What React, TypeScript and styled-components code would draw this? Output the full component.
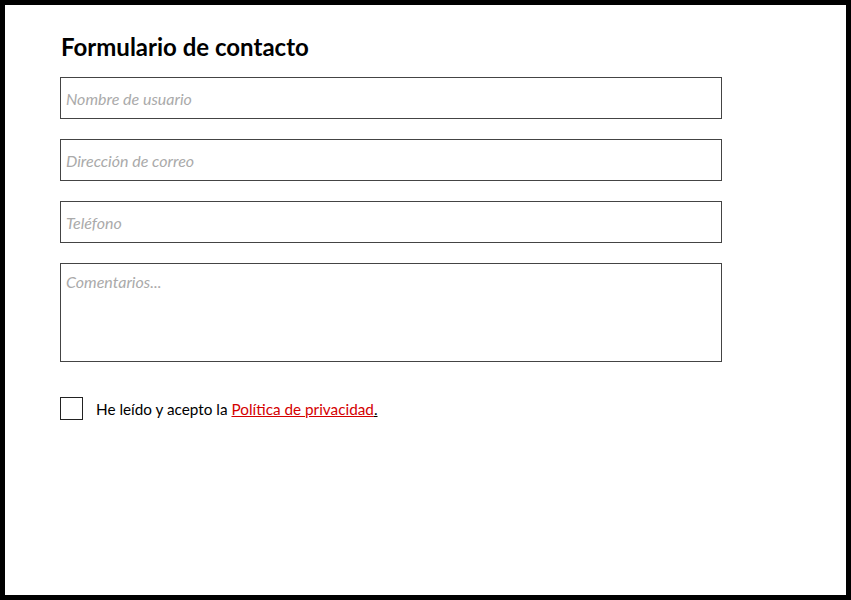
import React from 'react';
import styled, { createGlobalStyle } from 'styled-components';

const GlobalStyle = createGlobalStyle`
  html, body {
    margin: 0;
    padding: 0;
    background: #fff;
  }
  * {
    box-sizing: border-box;
  }
`;

const Frame = styled.div`
  width: 851px;
  height: 600px;
  border: 5px solid #000;
  background: #fff;
  padding: 27px 0 0 55px;
  font-family: Lato, 'Liberation Sans', sans-serif;
  color: #000;
`;

const Form = styled.form`
  width: 662px;
  display: flex;
  flex-direction: column;
`;

const Title = styled.h1`
  font-size: 24px;
  font-weight: 700;
  line-height: 30px;
  margin: 0 0 15px 1px;
`;

const Fields = styled.div`
  display: flex;
  flex-direction: column;
  gap: 20px;
`;

const fieldStyles = `
  width: 100%;
  border: 1px solid #444;
  border-radius: 0;
  background: #fff;
  font-family: Lato, 'Liberation Sans', sans-serif;
  font-size: 16px;
  padding: 0 5px;
  outline: none;
  color: #222;

  &::placeholder {
    color: #aaa;
    font-style: italic;
  }
`;

const TextInput = styled.input`
  ${fieldStyles}
  height: 42px;
`;

const Comments = styled.textarea`
  ${fieldStyles}
  height: 99px;
  padding-top: 8px;
  resize: none;
`;

const ConsentRow = styled.label`
  display: flex;
  align-items: center;
  gap: 13px;
  margin-top: 35px;
  font-size: 15.3px;
`;

const CheckBox = styled.span`
  width: 23px;
  height: 23px;
  border: 1px solid #222;
  background: #fff;
  flex-shrink: 0;
`;

const Underlined = styled.span`
  text-decoration: underline;
`;

const PolicyLink = styled.a`
  color: #d40000;
  text-decoration: underline;
`;

export default function App() {
  return (
    <>
      <GlobalStyle />
      <Frame>
        <Form onSubmit={(e) => e.preventDefault()}>
          <Title>Formulario de contacto</Title>
          <Fields>
            <TextInput type="text" placeholder="Nombre de usuario" />
            <TextInput type="email" placeholder="Dirección de correo" />
            <TextInput type="tel" placeholder="Teléfono" />
            <Comments placeholder="Comentarios..." />
          </Fields>
          <ConsentRow>
            <CheckBox />
            <span>
              He leído y acepto la <PolicyLink href="#">Política de privacidad</PolicyLink>
              <Underlined>.</Underlined>
            </span>
          </ConsentRow>
        </Form>
      </Frame>
    </>
  );
}
